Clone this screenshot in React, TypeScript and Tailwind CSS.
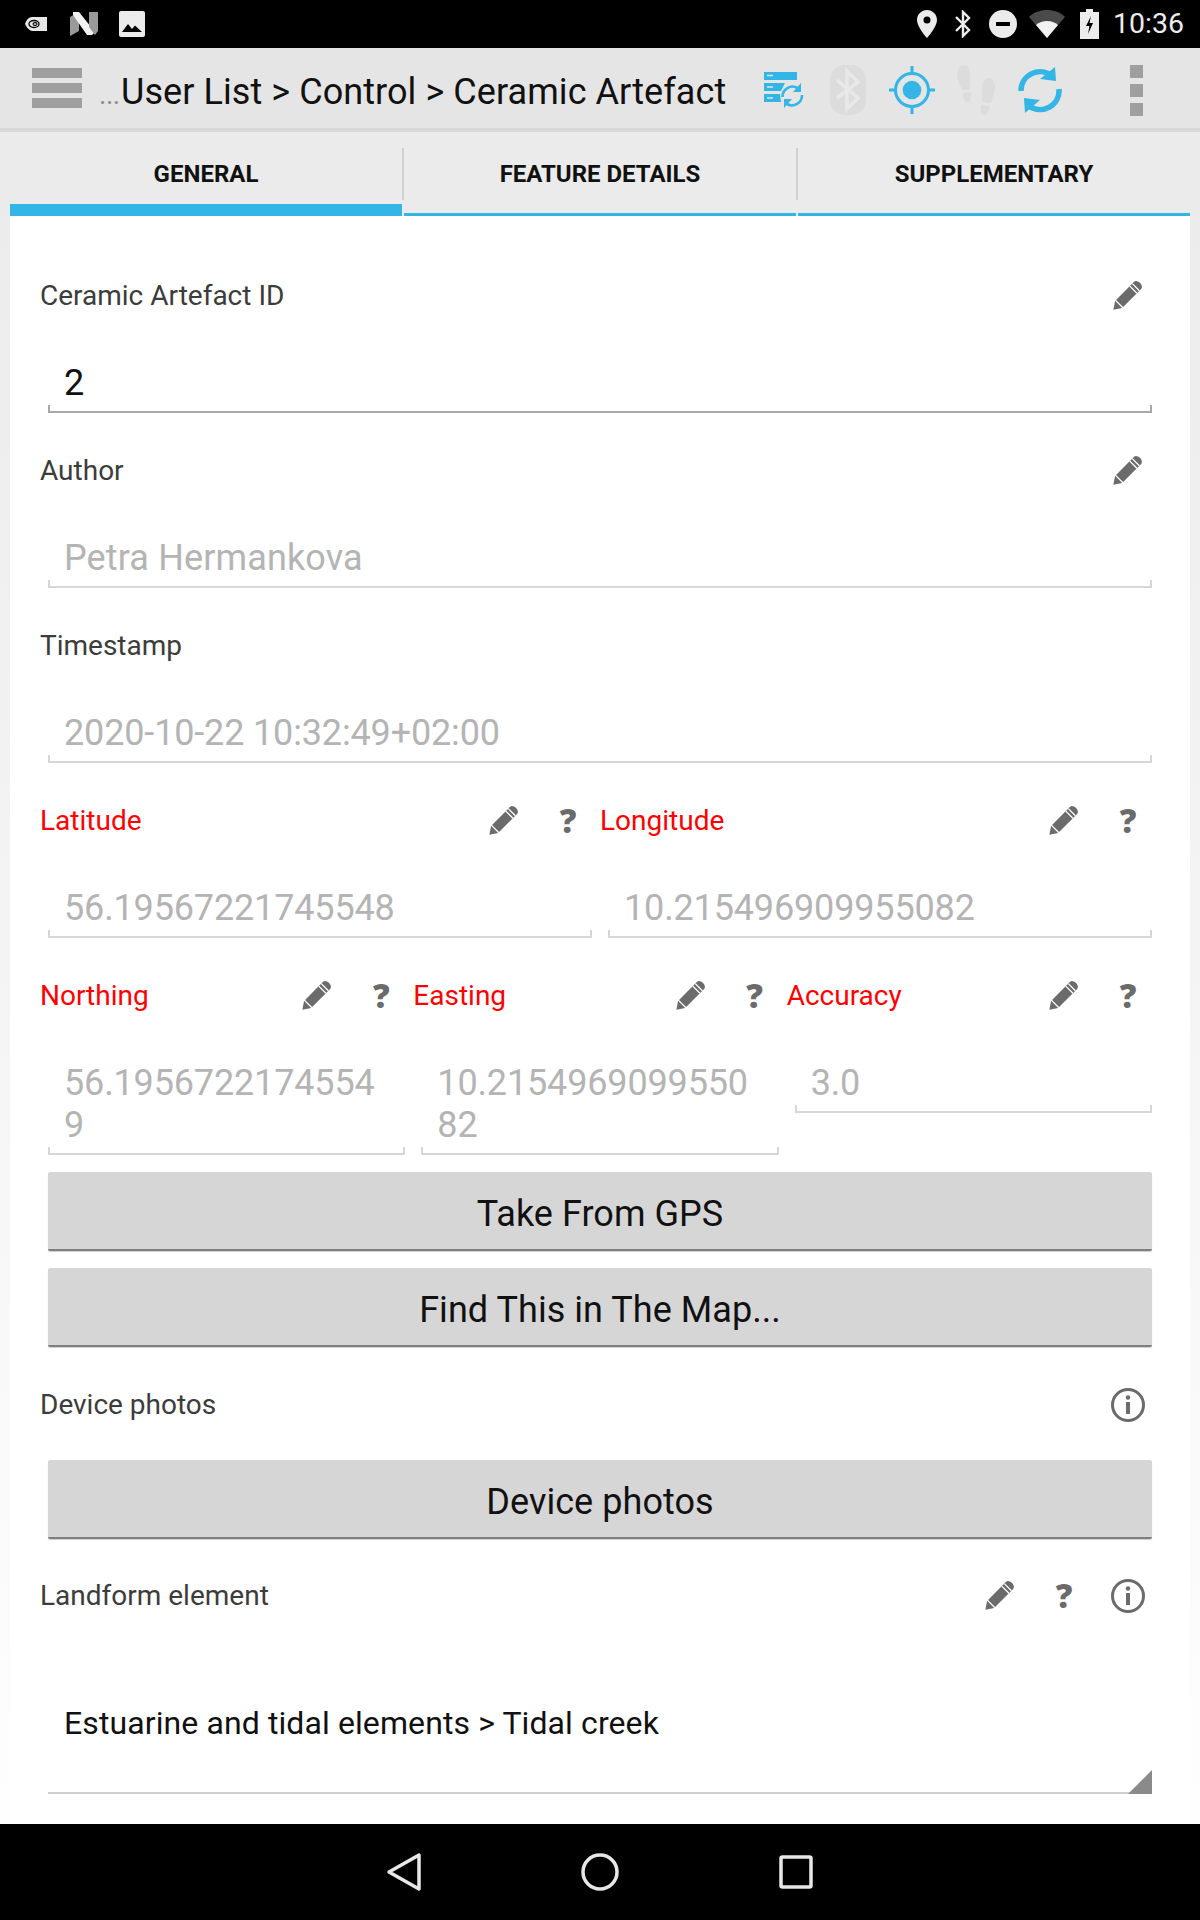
import * as React from 'react';

const BLUE = '#33b5e5';

const PencilIcon = () => (
  <svg width="32" height="32" viewBox="1 0 32 32" className="block overflow-visible">
    <g transform="rotate(45 16 16)">
      <path d="M11 1a5 3.500 0 0 1 10 0v25.500H11z" fill="#6b6b6b" />
      <path d="M11 3.500h10M11 7h10" stroke="#ffffff" strokeWidth="1.300" />
      <path d="M11 27.800h10l-5 7.500z" fill="#6b6b6b" />
    </g>
  </svg>
);

const QuestionIcon = () => (
  <span className="block w-[32px] text-center font-['Open_Sans',sans-serif] text-[33px] leading-[32px] font-extrabold text-[#6b6b6b]">
    ?
  </span>
);

const InfoIcon = () => (
  <svg width="36" height="36" viewBox="0 0 36 36" className="block">
    <circle cx="18" cy="18" r="15.500" fill="none" stroke="#6b6b6b" strokeWidth="3" />
    <circle cx="18" cy="10.500" r="2.200" fill="#6b6b6b" />
    <rect x="16" y="15" width="4" height="12" fill="#6b6b6b" />
  </svg>
);

const icons = {
  pencil: <PencilIcon />,
  question: <QuestionIcon />,
  info: <InfoIcon />,
};

type IconName = keyof typeof icons;

const LabelRow = ({
  label,
  red,
  tools = [],
}: {
  label: string;
  red?: boolean;
  tools?: IconName[];
}) => (
  <div className="flex h-[64px] items-center">
    <span className={`flex-1 text-[28px] ${red ? 'text-[#ff0000]' : 'text-[#3c3c3c]'}`}>{label}</span>
    {tools.map((name) => (
      <span key={name} className="flex h-[64px] w-[64px] items-center justify-center">
        {icons[name]}
      </span>
    ))}
  </div>
);

const Input = ({ value, disabled = true }: { value: string[]; disabled?: boolean }) => (
  <div className="mx-2">
    <div
      className={`pt-[34px] pb-[1px] pl-4 text-[36px] leading-[42px] ${
        /\d/.test(value[0]) ? 'tracking-[-0.15px]' : 'tracking-[0.13px]'
      } ${disabled ? 'text-[#b4b4b4]' : 'text-[#111111]'}`}
    >
      {value.map((line) => (
        <div key={line} className="break-all">
          {line}
        </div>
      ))}
    </div>
    <div
      className={`h-[8px] border-x-2 border-b-2 ${
        disabled ? 'border-[#d6d6d6]' : 'border-[#a8a8a8]'
      }`}
    />
  </div>
);

const Field = ({
  label,
  red,
  tools,
  value,
  disabled,
}: {
  label: string;
  red?: boolean;
  tools?: IconName[];
  value: string[];
  disabled?: boolean;
}) => (
  <div className="min-w-0">
    <LabelRow label={label} red={red} tools={tools} />
    <Input value={value} disabled={disabled} />
  </div>
);

const ActionButton = ({ children }: { children: string }) => (
  <button className="mx-2 flex h-[79px] w-[calc(100%-16px)] items-center justify-center rounded-[2px] border-b-2 border-[#7f7f7f] bg-[#d6d6d6] pt-[6px] text-[36px] tracking-[0.05px] text-[#111111] shadow-[0_1px_1px_#cfcfcf]">
    {children}
  </button>
);

const StatusBar = () => (
  <div className="flex h-[48px] items-center bg-black pl-[25px]">
    <svg width="22" height="16" viewBox="0 0 22 16">
      <path d="M7 1h15v14H7C3 14 1 10 0 8c1-3 3-7 7-7z" fill="#e8e8e8" />
      <ellipse cx="9" cy="8" rx="5" ry="3.500" fill="none" stroke="#000" strokeWidth="1.300" />
      <ellipse cx="10" cy="8" rx="2" ry="1.400" fill="none" stroke="#000" strokeWidth="1.100" />
    </svg>
    <svg width="28" height="24" viewBox="0 0 28 24" className="ml-[23px]">
      <path d="M0 5l9-5v19l-9 5z" fill="#9a9a9a" />
      <path d="M3 0h6l16 20-3 3h-5L3 3z" fill="#f2f2f2" />
      <path d="M19 0h9v19l-3 4-6-8z" fill="#9a9a9a" />
    </svg>
    <svg width="26" height="26" viewBox="0 0 26 26" className="ml-[21px]">
      <rect width="26" height="26" rx="2" fill="#ececec" />
      <path d="M3 21l6-8 4 5 3-3.500 7 6.500z" fill="#000" />
    </svg>
    <div className="ml-auto flex items-center">
      <svg width="20" height="28" viewBox="0 0 20 28">
        <path
          d="M10 0C4.500 0 0 4.400 0 10c0 7 10 18 10 18s10-11 10-18C20 4.400 15.500 0 10 0zm0 13.500a3.500 3.500 0 1 1 0-7 3.500 3.500 0 0 1 0 7z"
          fill="#ececec"
        />
      </svg>
      <svg width="18" height="28" viewBox="0 0 18 28" className="ml-[17px]">
        <path d="M2 7l13 13-6 6V2l6 6L2 21" fill="none" stroke="#ececec" strokeWidth="2.400" />
      </svg>
      <svg width="28" height="28" viewBox="0 0 28 28" className="ml-[17px]">
        <circle cx="14" cy="14" r="14" fill="#ececec" />
        <rect x="7" y="12" width="14" height="4" fill="#000" />
      </svg>
      <svg width="36" height="28" viewBox="0 0 36 28" className="ml-[12px]">
        <path d="M18 28L0 7C5 2 11 0 18 0s13 2 18 7z" fill="#4a4a4a" />
        <path d="M18 28L7 15c3-2.500 7-4 11-4s8 1.500 11 4z" fill="#f2f2f2" />
      </svg>
      <svg width="19" height="30" viewBox="0 0 19 30" className="ml-[15px]">
        <path d="M6 0h7v3h6v27H0V3h6z" fill="#ececec" />
        <path d="M11 7l-5 10h3.500L8 25l5-11H9.500z" fill="#000" />
      </svg>
      <span className="mr-[16px] ml-[14px] text-[28.500px] leading-[48px] text-[#ececec]">10:36</span>
    </div>
  </div>
);

const ToolBar = () => (
  <div className="flex h-[84px] items-center border-b-4 border-[#d8d8d8] bg-[#e5e5e5] pl-[32px]">
    <div className="flex w-[50px] flex-col gap-[5px]">
      <div className="h-[10px] bg-[#9f9f9f]" />
      <div className="h-[10px] bg-[#9f9f9f]" />
      <div className="h-[10px] bg-[#9f9f9f]" />
    </div>
    <span className="ml-[17px] flex items-baseline pt-[11px] text-[36px] leading-[44px] tracking-[0.07px] whitespace-nowrap text-[#111111]">
      <span className="w-[22px] text-[28px] tracking-[-0.5px] text-[#8c8c8c]">...</span>
      <span>User List &gt; Control &gt; Ceramic Artefact</span>
    </span>
    <svg width="40" height="36" viewBox="0 0 40 36" className="absolute top-[72px] left-[764px]">
      <path d="M0 0h33v8H0zM0 11h21l-4 8H0zM0 22h16l1 8H0z" fill={BLUE} />
      <path d="M3 3.500h6M3 15h6M3 26h6" stroke="#e5e5e5" strokeWidth="1.500" />
      <path d="M18.500 25a10 10 0 0 1 15-9" fill="none" stroke={BLUE} strokeWidth="2.600" />
      <path d="M37 11v9h-8z" fill={BLUE} />
      <path d="M38 23a10 10 0 0 1-15 9" fill="none" stroke={BLUE} strokeWidth="2.600" />
      <path d="M20 36v-9h8z" fill={BLUE} />
    </svg>
    <svg width="36" height="50" viewBox="0 0 36 50" className="absolute top-[65px] left-[830px]">
      <rect width="36" height="50" rx="15" fill="#dcdcdc" />
      <path d="M7 15l21 18-11 11V6l11 11L7 33" fill="none" stroke="#e8e8e8" strokeWidth="3.500" />
    </svg>
    <svg width="46" height="48" viewBox="0 0 46 48" className="absolute top-[66px] left-[889px]">
      <circle cx="23" cy="24" r="16.500" fill="none" stroke={BLUE} strokeWidth="3" />
      <circle cx="23" cy="24" r="9.300" fill={BLUE} />
      <path d="M23 0v8M23 40v8M0 24h7M39 24h7" stroke={BLUE} strokeWidth="3" />
    </svg>
    <svg width="38" height="50" viewBox="0 0 38 50" className="absolute top-[65px] left-[957px]">
      <path
        d="M7 0C11 0 13 5 13 11C13 17 13 21 13 25L5 25C4 20 0 16 0 10C0 4 3 0 7 0zM6 28L14 27C15 32 14 37 10 37C7 37 6 33 6 28z"
        fill="#dcdcdc"
      />
      <path
        d="M32 13C36 13 38 18 38 23C38 28 35 33 34 38L25 37C25 32 25 28 25 22C25 17 28 13 32 13zM24 40L33 41C32 46 30 50 27 50C24 50 23 45 24 40z"
        fill="#dcdcdc"
      />
    </svg>
    <svg width="44" height="48" viewBox="0 0 44 48" className="absolute top-[66px] left-[1018px]">
      <path d="M3 25A19 19 0 0 1 34 10" fill="none" stroke={BLUE} strokeWidth="5.500" />
      <path d="M37 1l1 14-16-2z" fill={BLUE} />
      <path d="M41 23A19 19 0 0 1 11 40" fill="none" stroke={BLUE} strokeWidth="5.500" />
      <path d="M7 47L6 32l16 2z" fill={BLUE} />
    </svg>
    <div className="absolute top-[65px] left-[1130px] flex w-[13px] flex-col gap-[6px]">
      <div className="h-[13px] bg-[#9f9f9f]" />
      <div className="h-[13px] bg-[#9f9f9f]" />
      <div className="h-[13px] bg-[#9f9f9f]" />
    </div>
  </div>
);

const Tab = ({ label, active, last }: { label: string; active?: boolean; last?: boolean }) => (
  <div className="relative flex h-[84px] flex-1 items-center justify-center text-[24px] font-bold text-[#111111]">
    {label}
    <div className={`absolute inset-x-0 bottom-0 ${active ? 'h-[12px]' : 'h-[3px]'} bg-[#33b5e5]`} />
    {!last && <div className="absolute top-[16px] right-[-2px] h-[52px] w-[2px] bg-[#d0d0d0]" />}
  </div>
);

const TabBar = () => (
  <div className="flex gap-[2px] bg-[#ebebeb] px-[10px]">
    <Tab label="GENERAL" active />
    <Tab label="FEATURE DETAILS" />
    <Tab label="SUPPLEMENTARY" last />
  </div>
);

const NavBar = () => (
  <div className="flex h-[96px] items-center justify-center bg-black pr-[2px]">
    <svg width="36" height="40" viewBox="0 0 36 40" className="mr-[158px]">
      <path d="M33 3v34L3 20z" fill="none" stroke="#e8e8e8" strokeWidth="3.500" strokeLinejoin="round" />
    </svg>
    <svg width="40" height="40" viewBox="0 0 40 40">
      <circle cx="20" cy="20" r="17" fill="none" stroke="#e8e8e8" strokeWidth="3.500" />
    </svg>
    <svg width="34" height="34" viewBox="0 0 34 34" className="ml-[159px]">
      <rect x="2" y="2" width="30" height="30" rx="1.500" fill="none" stroke="#e8e8e8" strokeWidth="3.500" />
    </svg>
  </div>
);

export default function App() {
  return (
    <div className="relative flex h-[1920px] w-[1200px] flex-col overflow-hidden font-['Roboto',sans-serif]">
      <StatusBar />
      <ToolBar />
      <div className="flex flex-1 flex-col bg-linear-to-b from-[#ebebeb] to-[#fefefe]">
        <TabBar />
        <div className="mx-[10px] flex flex-1 flex-col bg-white px-[30px] pt-[48px]">
          <Field label="Ceramic Artefact ID" tools={['pencil']} value={['2']} disabled={false} />
          <div className="mt-[26px]">
            <Field label="Author" tools={['pencil']} value={['Petra Hermankova']} />
          </div>
          <div className="mt-[26px]">
            <Field label="Timestamp" value={['2020-10-22 10:32:49+02:00']} />
          </div>
          <div className="mt-[26px] grid grid-cols-2">
            <Field label="Latitude" red tools={['pencil', 'question']} value={['56.19567221745548']} />
            <Field label="Longitude" red tools={['pencil', 'question']} value={['10.215496909955082']} />
          </div>
          <div className="mt-[26px] grid grid-cols-3 items-start">
            <Field label="Northing" red tools={['pencil', 'question']} value={['56.1956722174554', '9']} />
            <Field label="Easting" red tools={['pencil', 'question']} value={['10.2154969099550', '82']} />
            <Field label="Accuracy" red tools={['pencil', 'question']} value={['3.0']} />
          </div>
          <div className="mt-[17px]">
            <ActionButton>Take From GPS</ActionButton>
          </div>
          <div className="mt-[17px]">
            <ActionButton>Find This in The Map...</ActionButton>
          </div>
          <div className="mt-[26px]">
            <LabelRow label="Device photos" tools={['info']} />
          </div>
          <div className="mt-[23px]">
            <ActionButton>Device photos</ActionButton>
          </div>
          <div className="mt-[25px]">
            <LabelRow label="Landform element" tools={['pencil', 'question', 'info']} />
            <div className="relative">
              <div className="mx-2 border-b-2 border-[#cfcfcf] pt-[74px] pb-[48px] pl-4 text-[32px] leading-[42px] tracking-[0.1px] text-[#111111]">
                Estuarine and tidal elements &gt; Tidal creek
              </div>
              <div className="absolute right-2 bottom-0 h-[24px] w-[24px] bg-[#8a8a8a] [clip-path:polygon(100%_0,100%_100%,0_100%)]" />
            </div>
          </div>
        </div>
      </div>
      <NavBar />
    </div>
  );
}
